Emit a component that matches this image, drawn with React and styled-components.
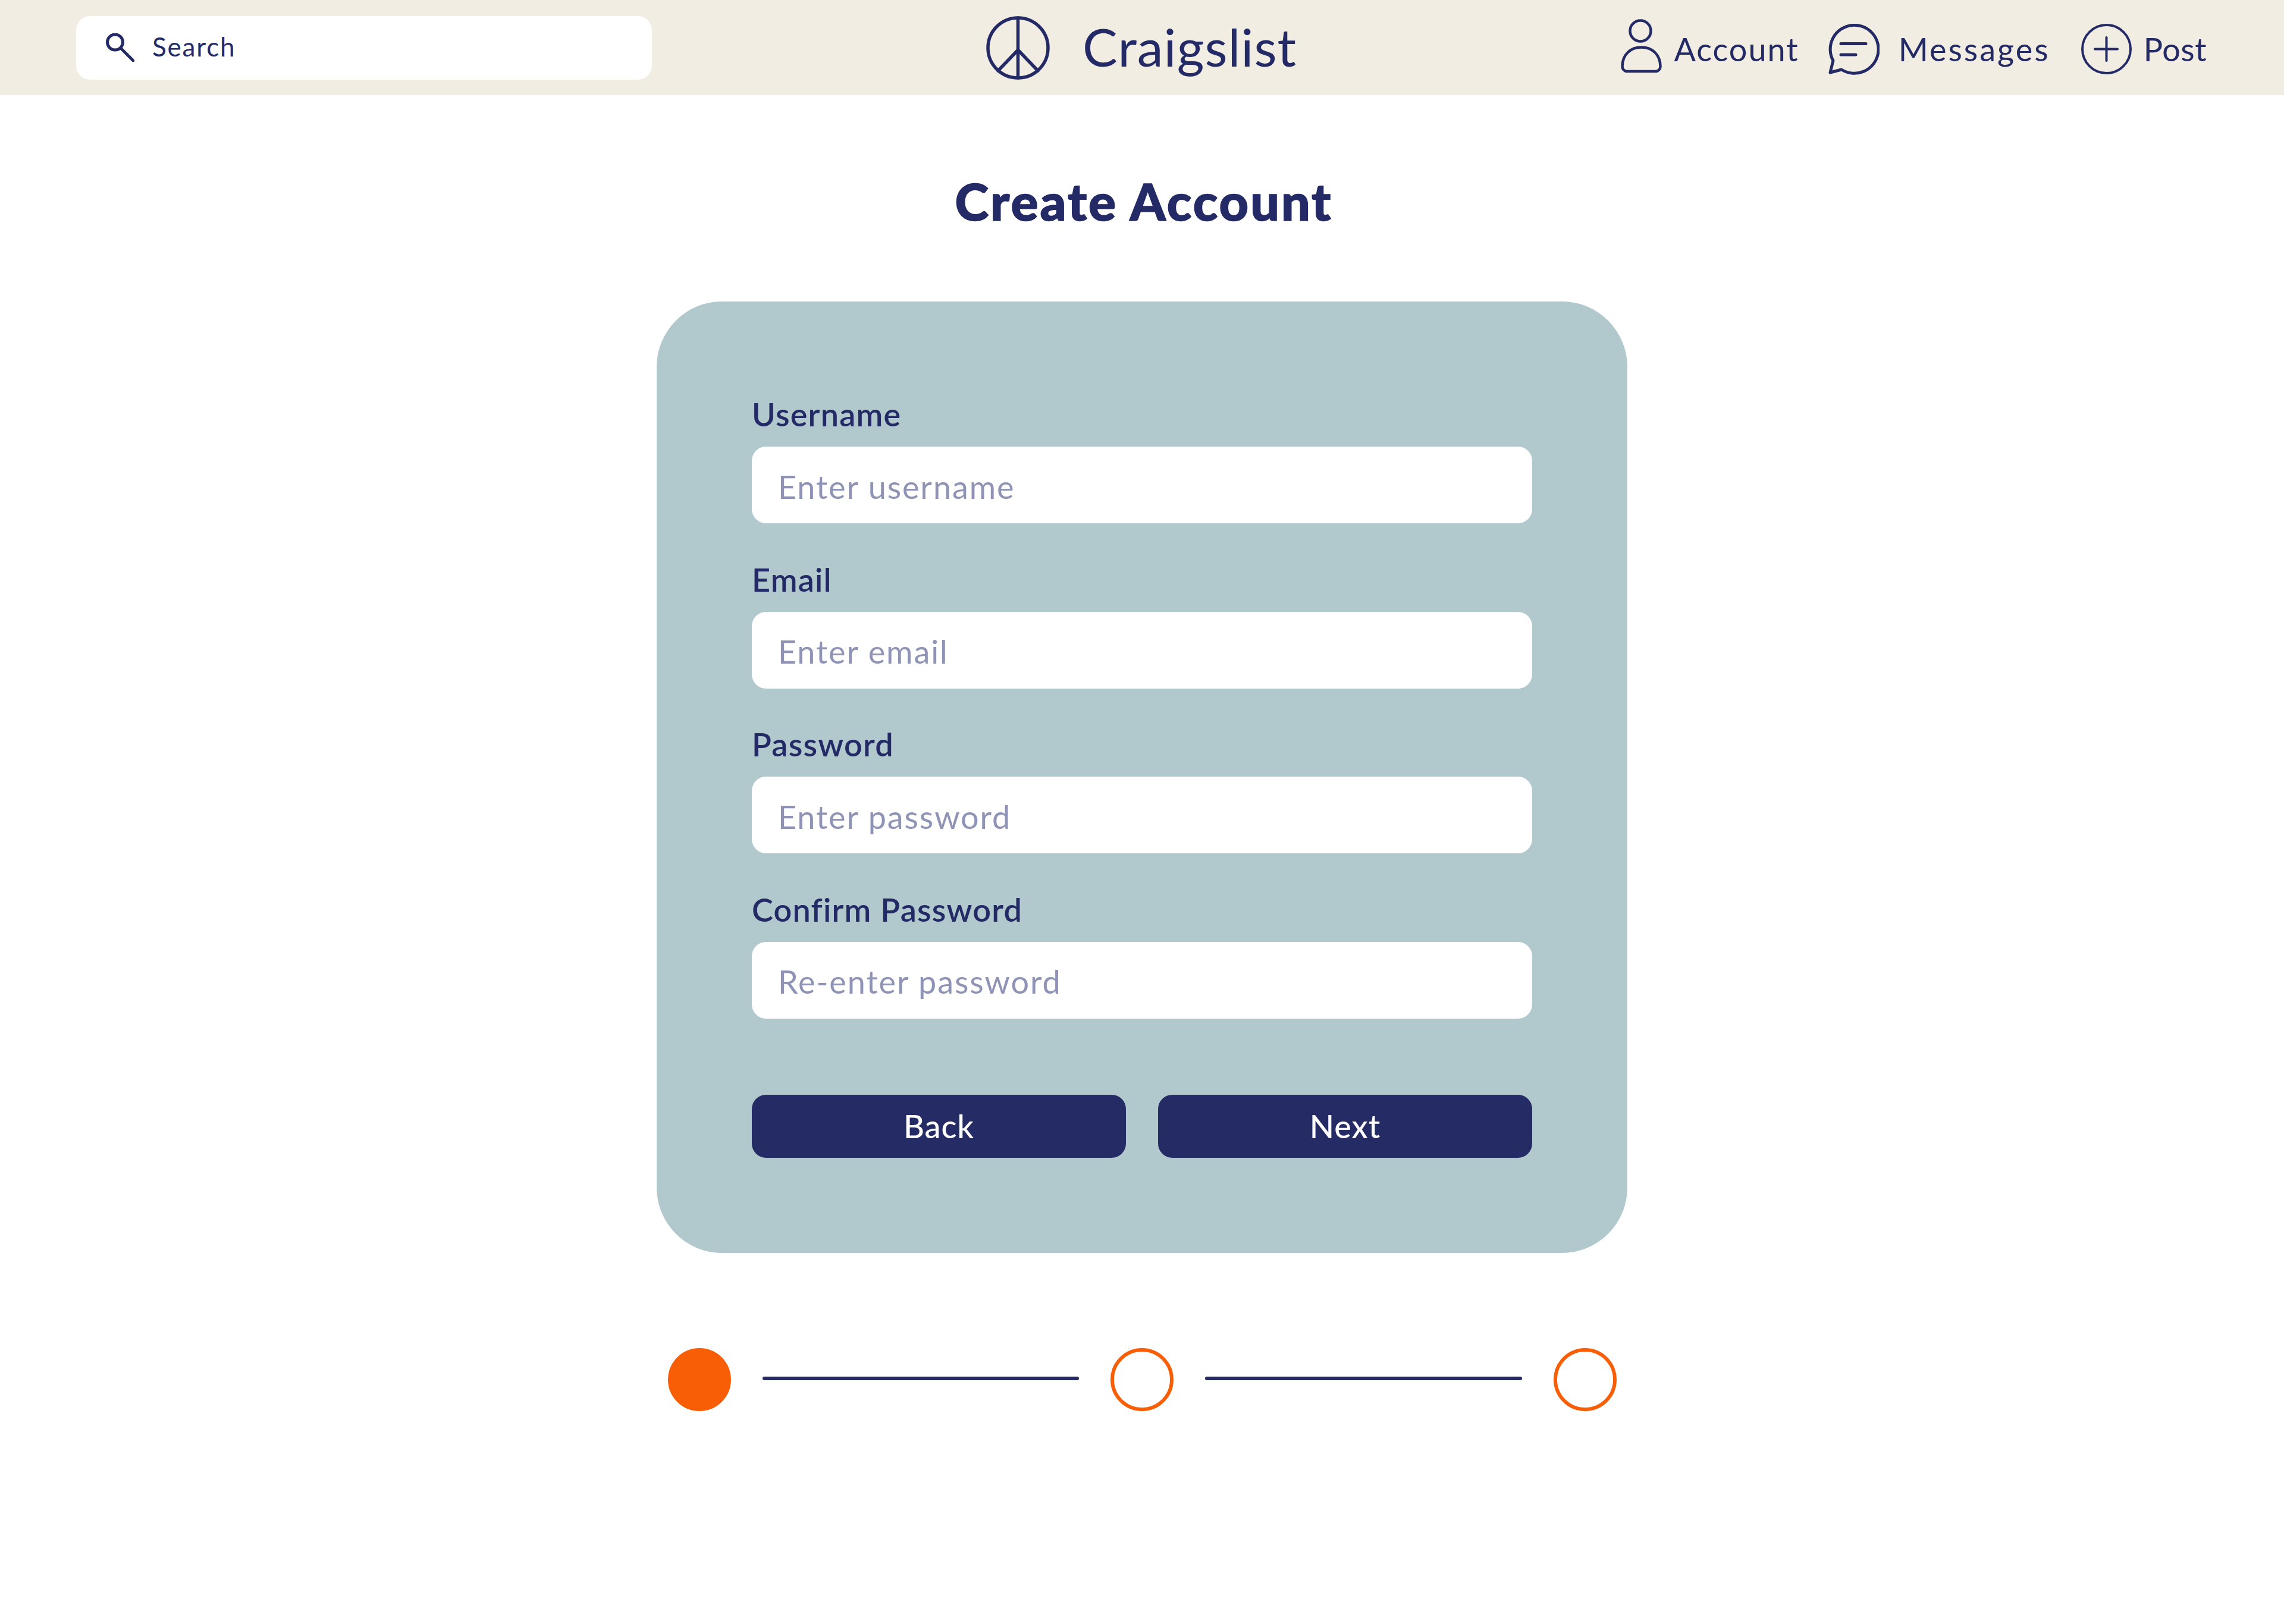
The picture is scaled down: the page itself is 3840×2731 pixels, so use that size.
import React from "react";
import styled, { createGlobalStyle } from "styled-components";

const navy = "#232a66";

const GlobalStyle = createGlobalStyle`
  html, body {
    margin: 0;
    padding: 0;
    background: #ffffff;
  }
  body {
    font-family: Lato, "Liberation Sans", sans-serif;
    color: ${navy};
  }
`;

const Page = styled.div`
  min-height: 2731px;
  display: flex;
  flex-direction: column;
  background: #ffffff;
`;

const Header = styled.header`
  height: 160px;
  display: grid;
  grid-template-columns: 1fr auto 1fr;
  align-items: center;
  padding: 0 130px 0 128px;
  background: #f1ede3;
`;

const SearchBox = styled.div`
  width: 968px;
  height: 107px;
  display: flex;
  align-items: center;
  gap: 30px;
  padding-left: 50px;
  box-sizing: border-box;
  background: #ffffff;
  border-radius: 24px;
`;

const SearchLabel = styled.span`
  font-size: 44px;
  line-height: 48px;
  letter-spacing: 1.8px;
  margin-bottom: 4px;
`;

const Logo = styled.div`
  display: flex;
  align-items: center;
  gap: 55px;
`;

const LogoText = styled.span`
  font-size: 88px;
  line-height: 107px;
  letter-spacing: 1px;
  margin-bottom: 3px;
`;

const Nav = styled.nav`
  display: flex;
  justify-content: flex-end;
  align-items: center;
  padding-top: 5px;
`;

const NavItem = styled.a`
  display: flex;
  align-items: center;
  gap: ${(p) => p.$gap}px;
  margin-left: ${(p) => p.$before}px;
  font-size: 54px;
  letter-spacing: ${(p) => p.$track}px;
`;

const AccountIcon = styled.svg`
  margin-bottom: 10px;
`;

const Main = styled.main`
  display: flex;
  flex-direction: column;
  align-items: center;
  padding-top: 128px;
`;

const Title = styled.h1`
  margin: 0 0 119px;
  font-size: 86px;
  line-height: 100px;
  font-weight: 900;
  letter-spacing: 3px;
  -webkit-text-stroke: 1.5px ${navy};
  transform: translateX(3px);
`;

const Card = styled.form`
  width: 1632px;
  box-sizing: border-box;
  padding: 160px;
  display: flex;
  flex-direction: column;
  background: #b1c8cc;
  border-radius: 110px;
`;

const Fields = styled.div`
  display: flex;
  flex-direction: column;
  gap: 64.6px;
`;

const Field = styled.label`
  display: flex;
  flex-direction: column;
  gap: 24px;
`;

const FieldLabel = styled.span`
  font-size: 54px;
  line-height: 60px;
  font-weight: 600;
  letter-spacing: 1.2px;
`;

const Input = styled.input`
  height: 129px;
  box-sizing: border-box;
  padding: 5px 44px 0;
  border: 0;
  outline: 0;
  background: #ffffff;
  border-radius: 24px;
  font-family: inherit;
  font-size: 54px;
  letter-spacing: 1.9px;

  &::placeholder {
    color: #8f93b6;
    opacity: 1;
  }
`;

const Buttons = styled.div`
  display: grid;
  grid-template-columns: 1fr 1fr;
  gap: 54px;
  margin-top: 128.2px;
`;

const Button = styled.button`
  height: 106px;
  border: 0;
  border-radius: 24px;
  background: #252b64;
  color: #ffffff;
  font-family: inherit;
  font-size: 54px;
  font-weight: 500;
  letter-spacing: 1px;
`;

const Stepper = styled.div`
  width: 1595px;
  display: flex;
  align-items: center;
  gap: 53px;
  margin-top: 160px;
`;

const Step = styled.span`
  width: 106px;
  height: 106px;
  flex: none;
  box-sizing: border-box;
  border-radius: 50%;
  border: 6px solid #f75e06;
  background: ${(p) => (p.$done ? "#f75e06" : "transparent")};
`;

const StepLine = styled.span`
  flex: 1;
  height: 6px;
  margin-bottom: 3px;
  border-radius: 3px;
  background: ${navy};
`;

const icon = {
  fill: "none",
  stroke: navy,
  strokeLinecap: "round",
  strokeLinejoin: "round",
};

function SearchIcon() {
  return (
    <svg width="48" height="48" viewBox="0 0 48 48" {...icon} strokeWidth="5">
      <circle cx="15.5" cy="15" r="13" />
      <path d="M25 25 46 46" />
    </svg>
  );
}

function PeaceIcon() {
  return (
    <svg width="107" height="107" viewBox="0 0 107 107" {...icon} strokeWidth="5.5">
      <circle cx="53.5" cy="53.5" r="50.5" />
      <path d="M53.5 3V104M53.5 57 20 92M53.5 57 87 92" />
    </svg>
  );
}

function PersonIcon() {
  return (
    <AccountIcon width="69" height="91" viewBox="0 0 69 91" {...icon} strokeWidth="4.5">
      <circle cx="33" cy="20" r="17.5" />
      <path d="M2.5 80C2.5 60 16 47.5 34.5 47.5S66.5 60 66.5 80a8 8 0 0 1-8 8H10.5a8 8 0 0 1-8-8Z" />
    </AccountIcon>
  );
}

function MessageIcon() {
  return (
    <svg width="88" height="86" viewBox="0 0 88 86" {...icon} strokeWidth="5">
      <path d="M10 62 5 82 24 77A40.5 40.5 0 1 0 10 62Z" />
      <path d="M23 33.5H65M23 52H48" />
    </svg>
  );
}

function PlusIcon() {
  return (
    <svg width="85" height="85" viewBox="0 0 85 85" {...icon} strokeWidth="4">
      <circle cx="42.5" cy="42.5" r="40.5" />
      <path d="M23 42.5H61M42.5 23V62" />
    </svg>
  );
}

const fields = [
  { label: "Username", placeholder: "Enter username", type: "text" },
  { label: "Email", placeholder: "Enter email", type: "email" },
  { label: "Password", placeholder: "Enter password", type: "password" },
  { label: "Confirm Password", placeholder: "Re-enter password", type: "password" },
];

export default function App() {
  return (
    <Page>
      <GlobalStyle />
      <Header>
        <SearchBox>
          <SearchIcon />
          <SearchLabel>Search</SearchLabel>
        </SearchBox>
        <Logo>
          <PeaceIcon />
          <LogoText>Craigslist</LogoText>
        </Logo>
        <Nav>
          <NavItem $before={0} $gap={20} $track={2}>
            <PersonIcon />
            Account
          </NavItem>
          <NavItem $before={47} $gap={32} $track={3}>
            <MessageIcon />
            Messages
          </NavItem>
          <NavItem $before={52} $gap={20} $track={0.5}>
            <PlusIcon />
            Post
          </NavItem>
        </Nav>
      </Header>
      <Main>
        <Title>Create Account</Title>
        <Card>
          <Fields>
            {fields.map((field) => (
              <Field key={field.label}>
                <FieldLabel>{field.label}</FieldLabel>
                <Input type={field.type} placeholder={field.placeholder} />
              </Field>
            ))}
          </Fields>
          <Buttons>
            <Button type="button">Back</Button>
            <Button type="button">Next</Button>
          </Buttons>
        </Card>
        <Stepper>
          <Step $done />
          <StepLine />
          <Step />
          <StepLine />
          <Step />
        </Stepper>
      </Main>
    </Page>
  );
}
